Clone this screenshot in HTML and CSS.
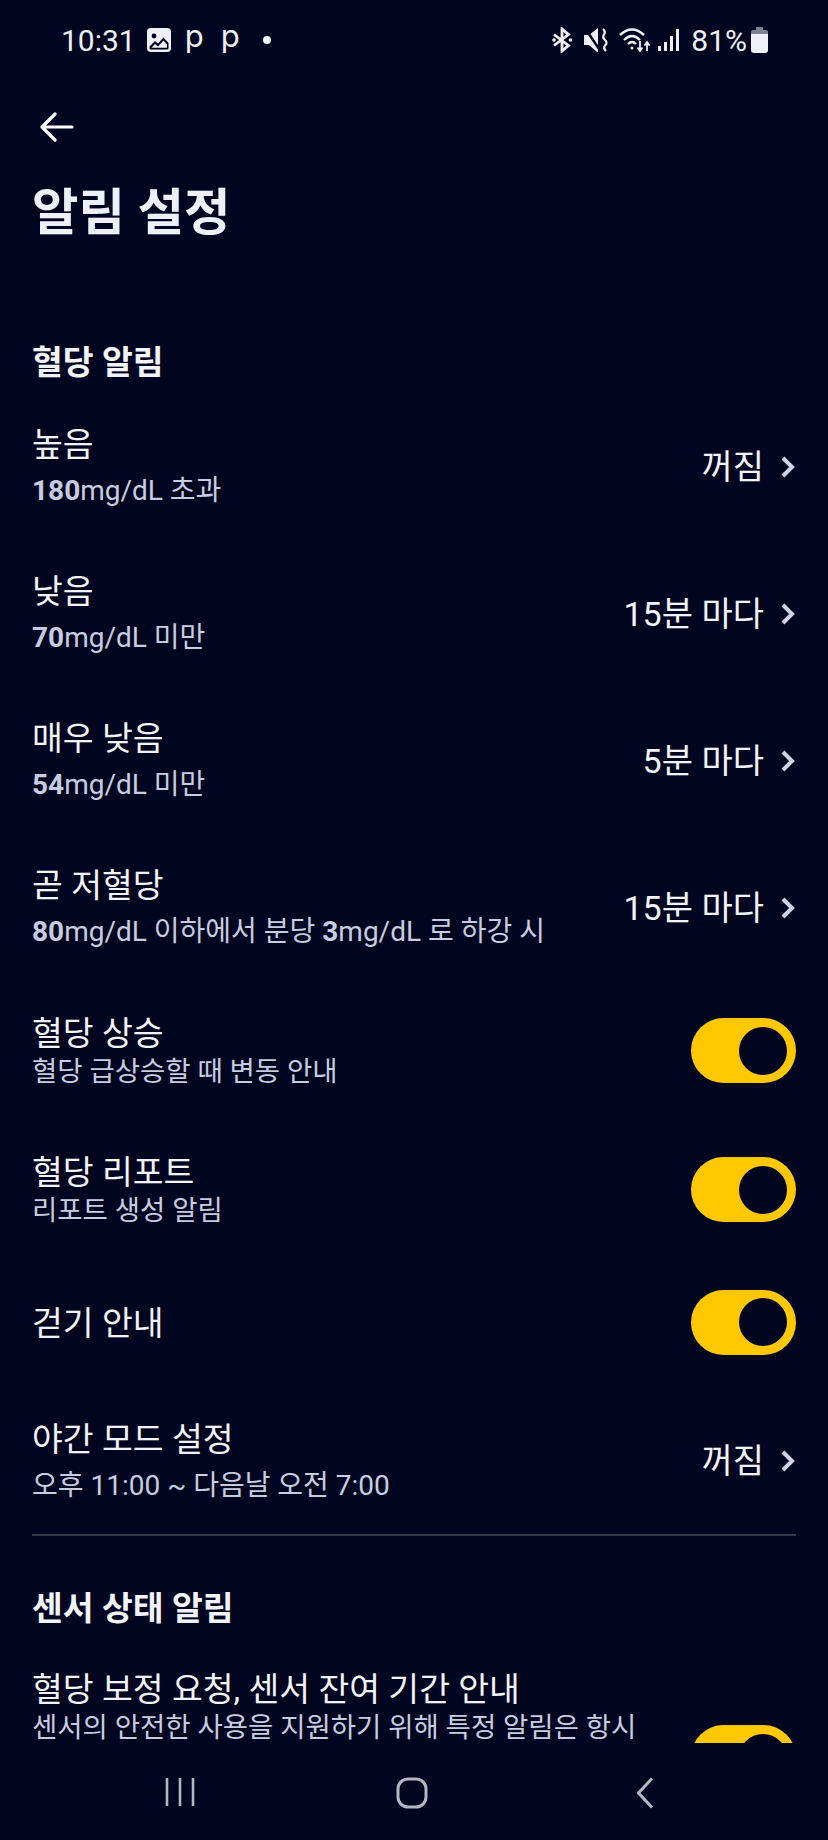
FILE: index.html
```html
<!DOCTYPE html>
<html lang="ko">
<head>
  <meta charset="UTF-8">
  <meta name="viewport" content="width=device-width, initial-scale=1.0">
  <title>알림 설정</title>
  <link rel="stylesheet" href="styles.css">
</head>
<body>
  <div class="screen">
    <div class="status-bar">
      <div class="status-left">
        <span class="status-time">10:31</span>
        <svg class="status-img" width="24" height="24" viewBox="0 0 24 24">
          <rect x="0" y="0" width="24" height="24" rx="4" fill="#eef0f6"/>
          <circle cx="7" cy="8" r="2.4" fill="#00061f"/>
          <path d="M2.5 18.5 L8 13 L11 15.5 L16.5 9.5 L21.5 15 V20 Q21.5 21.5 20 21.5 H4 Q2.5 21.5 2.5 20 Z" fill="#00061f"/>
          <path d="M4.5 19.8 L8 16 L11 18.5 L16.5 12.5 L20 16.5 V19.8 Z" fill="#eef0f6"/>
        </svg>
        <span class="status-p">p</span>
        <span class="status-p">p</span>
        <span class="status-dot"></span>
      </div>
      <div class="status-right">
        <svg width="22" height="26" viewBox="0 0 22 26" fill="none" stroke="#eef0f6" stroke-width="2.800">
          <path d="M3 7.500 L17.500 18.500 L11 24 V2 L17.500 7.500 L3 18.500"/>
          <circle cx="3" cy="13" r="1.800" fill="#eef0f6" stroke="none"/>
          <circle cx="19.500" cy="13" r="1.800" fill="#eef0f6" stroke="none"/>
        </svg>
        <svg width="24" height="24" viewBox="0 0 24 24">
          <path d="M0 7 H5 L14 0 V24 H13 L5 17 H0 Z" fill="#eef0f6"/>
          <path d="M1 0 L17 24" stroke="#00061f" stroke-width="2.500"/>
          <path d="M19 1 q3 3 1 5.500 q-2 3 1 5.500 q3 3 0 5.500 q-2 3 1 5.500" fill="none" stroke="#eef0f6" stroke-width="2.200"/>
        </svg>
        <svg class="status-wifi" width="31" height="26" viewBox="0 0 31 26" fill="none" stroke="#eef0f6" stroke-width="2.400">
          <path d="M1 8 Q13 -3 25 8"/>
          <path d="M5 13 Q13 5 21 13"/>
          <path d="M9 17 Q13 13 17 17"/>
          <circle cx="13" cy="21" r="1.500" fill="#eef0f6" stroke="none"/>
          <path d="M21 14 V23 M18.500 20.500 L21 24 L23.500 20.500" stroke-width="1.800"/>
          <path d="M28 24 V16 M25.500 18.500 L28 15 L30.500 18.500" stroke-width="1.800"/>
        </svg>
        <svg width="22" height="24" viewBox="0 0 22 24" fill="#eef0f6">
          <rect x="0" y="18" width="3" height="5"/>
          <rect x="6" y="14" width="3" height="9"/>
          <rect x="12" y="8" width="3" height="15"/>
          <rect x="18" y="1" width="3" height="22"/>
        </svg>
        <span class="status-batt">81%</span>
        <svg class="status-cell" width="17" height="26" viewBox="0 0 17 26">
          <path d="M5 0 H12 V3 H15 Q17 3 17 5 V7 H0 V5 Q0 3 2 3 H5 Z" fill="#7d8090"/>
          <path d="M0 7 H17 V23 Q17 26 14 26 H3 Q0 26 0 23 Z" fill="#eef0f6"/>
        </svg>
      </div>
    </div>

    <div class="page">
      <div class="back-btn">
        <svg width="34" height="30" viewBox="0 0 34 30" fill="none" stroke="#ffffff" stroke-width="3.200" stroke-linecap="round" stroke-linejoin="round">
          <path d="M32 15 H2.500 M15 2 L2 15 L15 28"/>
        </svg>
      </div>
      <h1 class="page-title">알림 설정</h1>

      <h2 class="section-title">혈당 알림</h2>

      <div class="row row-tall row-first">
        <div class="row-text">
          <div class="row-name">높음</div>
          <div class="row-sub"><b>180</b>mg/dL 초과</div>
        </div>
        <div class="row-value">꺼짐<svg class="chev" width="14" height="22" viewBox="0 0 14 22"><path d="M2 2 L11 11 L2 20"/></svg></div>
      </div>
      <div class="row row-tall">
        <div class="row-text">
          <div class="row-name">낮음</div>
          <div class="row-sub"><b>70</b>mg/dL 미만</div>
        </div>
        <div class="row-value">15분 마다<svg class="chev" width="14" height="22" viewBox="0 0 14 22"><path d="M2 2 L11 11 L2 20"/></svg></div>
      </div>
      <div class="row row-tall">
        <div class="row-text">
          <div class="row-name">매우 낮음</div>
          <div class="row-sub"><b>54</b>mg/dL 미만</div>
        </div>
        <div class="row-value">5분 마다<svg class="chev" width="14" height="22" viewBox="0 0 14 22"><path d="M2 2 L11 11 L2 20"/></svg></div>
      </div>
      <div class="row row-tall">
        <div class="row-text">
          <div class="row-name">곧 저혈당</div>
          <div class="row-sub"><b>80</b>mg/dL 이하에서 분당 <b>3</b>mg/dL 로 하강 시</div>
        </div>
        <div class="row-value">15분 마다<svg class="chev" width="14" height="22" viewBox="0 0 14 22"><path d="M2 2 L11 11 L2 20"/></svg></div>
      </div>

      <div class="row row-switch">
        <div class="row-text">
          <div class="row-name">혈당 상승</div>
          <div class="row-sub row-sub-tight">혈당 급상승할 때 변동 안내</div>
        </div>
        <div class="toggle"><span class="knob"></span></div>
      </div>
      <div class="row row-switch">
        <div class="row-text">
          <div class="row-name">혈당 리포트</div>
          <div class="row-sub row-sub-tight">리포트 생성 알림</div>
        </div>
        <div class="toggle"><span class="knob"></span></div>
      </div>
      <div class="row row-single">
        <div class="row-text">
          <div class="row-name">걷기 안내</div>
        </div>
        <div class="toggle"><span class="knob"></span></div>
      </div>
      <div class="row row-night">
        <div class="row-text">
          <div class="row-name">야간 모드 설정</div>
          <div class="row-sub">오후 11:00 ~ 다음날 오전 7:00</div>
        </div>
        <div class="row-value">꺼짐<svg class="chev" width="14" height="22" viewBox="0 0 14 22"><path d="M2 2 L11 11 L2 20"/></svg></div>
      </div>

      <div class="divider"></div>

      <h2 class="section-title section-sensor">센서 상태 알림</h2>

      <div class="row row-sensor">
        <div class="row-text">
          <div class="row-name">혈당 보정 요청, 센서 잔여 기간 안내</div>
          <div class="row-sub row-sub-tight">센서의 안전한 사용을 지원하기 위해 특정 알림은 항시</div>
        </div>
        <div class="toggle toggle-low"><span class="knob"></span></div>
      </div>
    </div>

    <div class="nav-bar">
      <svg width="30" height="30" viewBox="0 0 30 30" fill="none" stroke="#b4b6c2" stroke-width="2.600">
        <path d="M2 1 V29 M15 1 V29 M28 1 V29"/>
      </svg>
      <svg class="nav-home" width="32" height="32" viewBox="0 0 32 32" fill="none" stroke="#b4b6c2" stroke-width="3">
        <rect x="2" y="2" width="28" height="28" rx="10"/>
      </svg>
      <svg class="nav-back" width="18" height="32" viewBox="0 0 18 32" fill="none" stroke="#b4b6c2" stroke-width="3">
        <path d="M16 1.500 L2.500 16 L16 30.500"/>
      </svg>
    </div>
  </div>
</body>
</html>
```

FILE: styles.css
```css
* {
  box-sizing: border-box;
}

body {
  margin: 0;
  background-color: #00061f;
  font-family: Roboto, "Noto Sans CJK KR", sans-serif;
  color: #f2f3f8;
}

.screen {
  width: 828px;
  height: 1840px;
  display: flex;
  flex-direction: column;
  overflow: hidden;
}

.status-bar {
  height: 80px;
  flex: none;
  display: flex;
  justify-content: space-between;
  align-items: center;
  padding: 0 60px 0 61px;
}

.status-left,
.status-right {
  display: flex;
  align-items: center;
}

.status-time {
  font-size: 30px;
  color: #eef0f6;
  margin-right: 11px;
}

.status-img {
  margin-right: 14px;
}

.status-p {
  font-family: Inter, sans-serif;
  font-size: 31px;
  line-height: 32px;
  color: #eef0f6;
  width: 36px;
  position: relative;
  top: -4px;
}

.status-dot {
  width: 8px;
  height: 8px;
  margin-left: 6px;
  border-radius: 50%;
  background: #eef0f6;
}

.status-right svg {
  margin-right: 11px;
}

.status-right .status-wifi {
  margin-right: 8px;
}

.status-batt {
  font-size: 30px;
  color: #eef0f6;
  margin-right: 4px;
}

.status-right .status-cell {
  margin-right: 0;
}

.page {
  height: 1663px;
  flex: none;
  padding: 0 32px 0 32px;
  overflow: hidden;
}

.back-btn {
  height: 30px;
  margin: 32px 0 0 8px;
}

.back-btn svg {
  display: block;
}

.page-title {
  margin: 41px 0 0;
  font-size: 50.500px;
  line-height: 60px;
  font-weight: 700;
  color: #eef0f7;
}

.section-title {
  margin: 100px 0 0;
  font-size: 33.500px;
  line-height: 40px;
  font-weight: 700;
  color: #f2f3f8;
}

.section-sensor {
  margin-top: 53px;
}

.row {
  display: flex;
  justify-content: space-between;
  align-items: center;
}

.row-tall {
  height: 147px;
}

.row-first {
  margin-top: 10px;
}

.row-switch {
  height: 139px;
}

.row-switch .row-text {
  padding-top: 3px;
}

.row-single {
  height: 126px;
}

.row-single .row-text {
  padding-top: 4px;
}

.row-night {
  height: 149px;
}

.row-night .row-text {
  padding-top: 4px;
}

.row-night .row-value {
  padding-top: 2px;
}

.row-sensor {
  align-items: flex-start;
  height: 120px;
  margin-top: 41px;
}

.row-name {
  font-size: 33.500px;
  line-height: 40px;
  color: #f2f3f8;
}

.row-sub {
  margin-top: 8px;
  font-size: 28px;
  line-height: 36px;
  color: #c8cce0;
}

.row-sub-tight {
  margin-top: 0;
  font-size: 27.500px;
}

.row-sub b {
  font-weight: 700;
}

.row-value {
  display: flex;
  align-items: center;
  font-size: 34px;
  line-height: 40px;
  color: #f2f3f8;
}

.chev {
  margin: 0 1px 0 17px;
  fill: none;
  stroke: #d0d3e4;
  stroke-width: 4;
}

.toggle {
  width: 105px;
  height: 65px;
  flex: none;
  display: flex;
  justify-content: flex-end;
  align-items: center;
  padding-right: 9px;
  border-radius: 33px;
  background: #ffc800;
}

.toggle-low {
  margin-top: 55px;
}

.knob {
  width: 48px;
  height: 48px;
  border-radius: 50%;
  background: #00061f;
}

.divider {
  height: 2px;
  background: #33374a;
}

.nav-bar {
  flex: 1;
  display: flex;
  align-items: flex-start;
  padding: 34px 0 0 165px;
}

.nav-home {
  margin-left: 201px;
}

.nav-back {
  margin-left: 208px;
}
```
